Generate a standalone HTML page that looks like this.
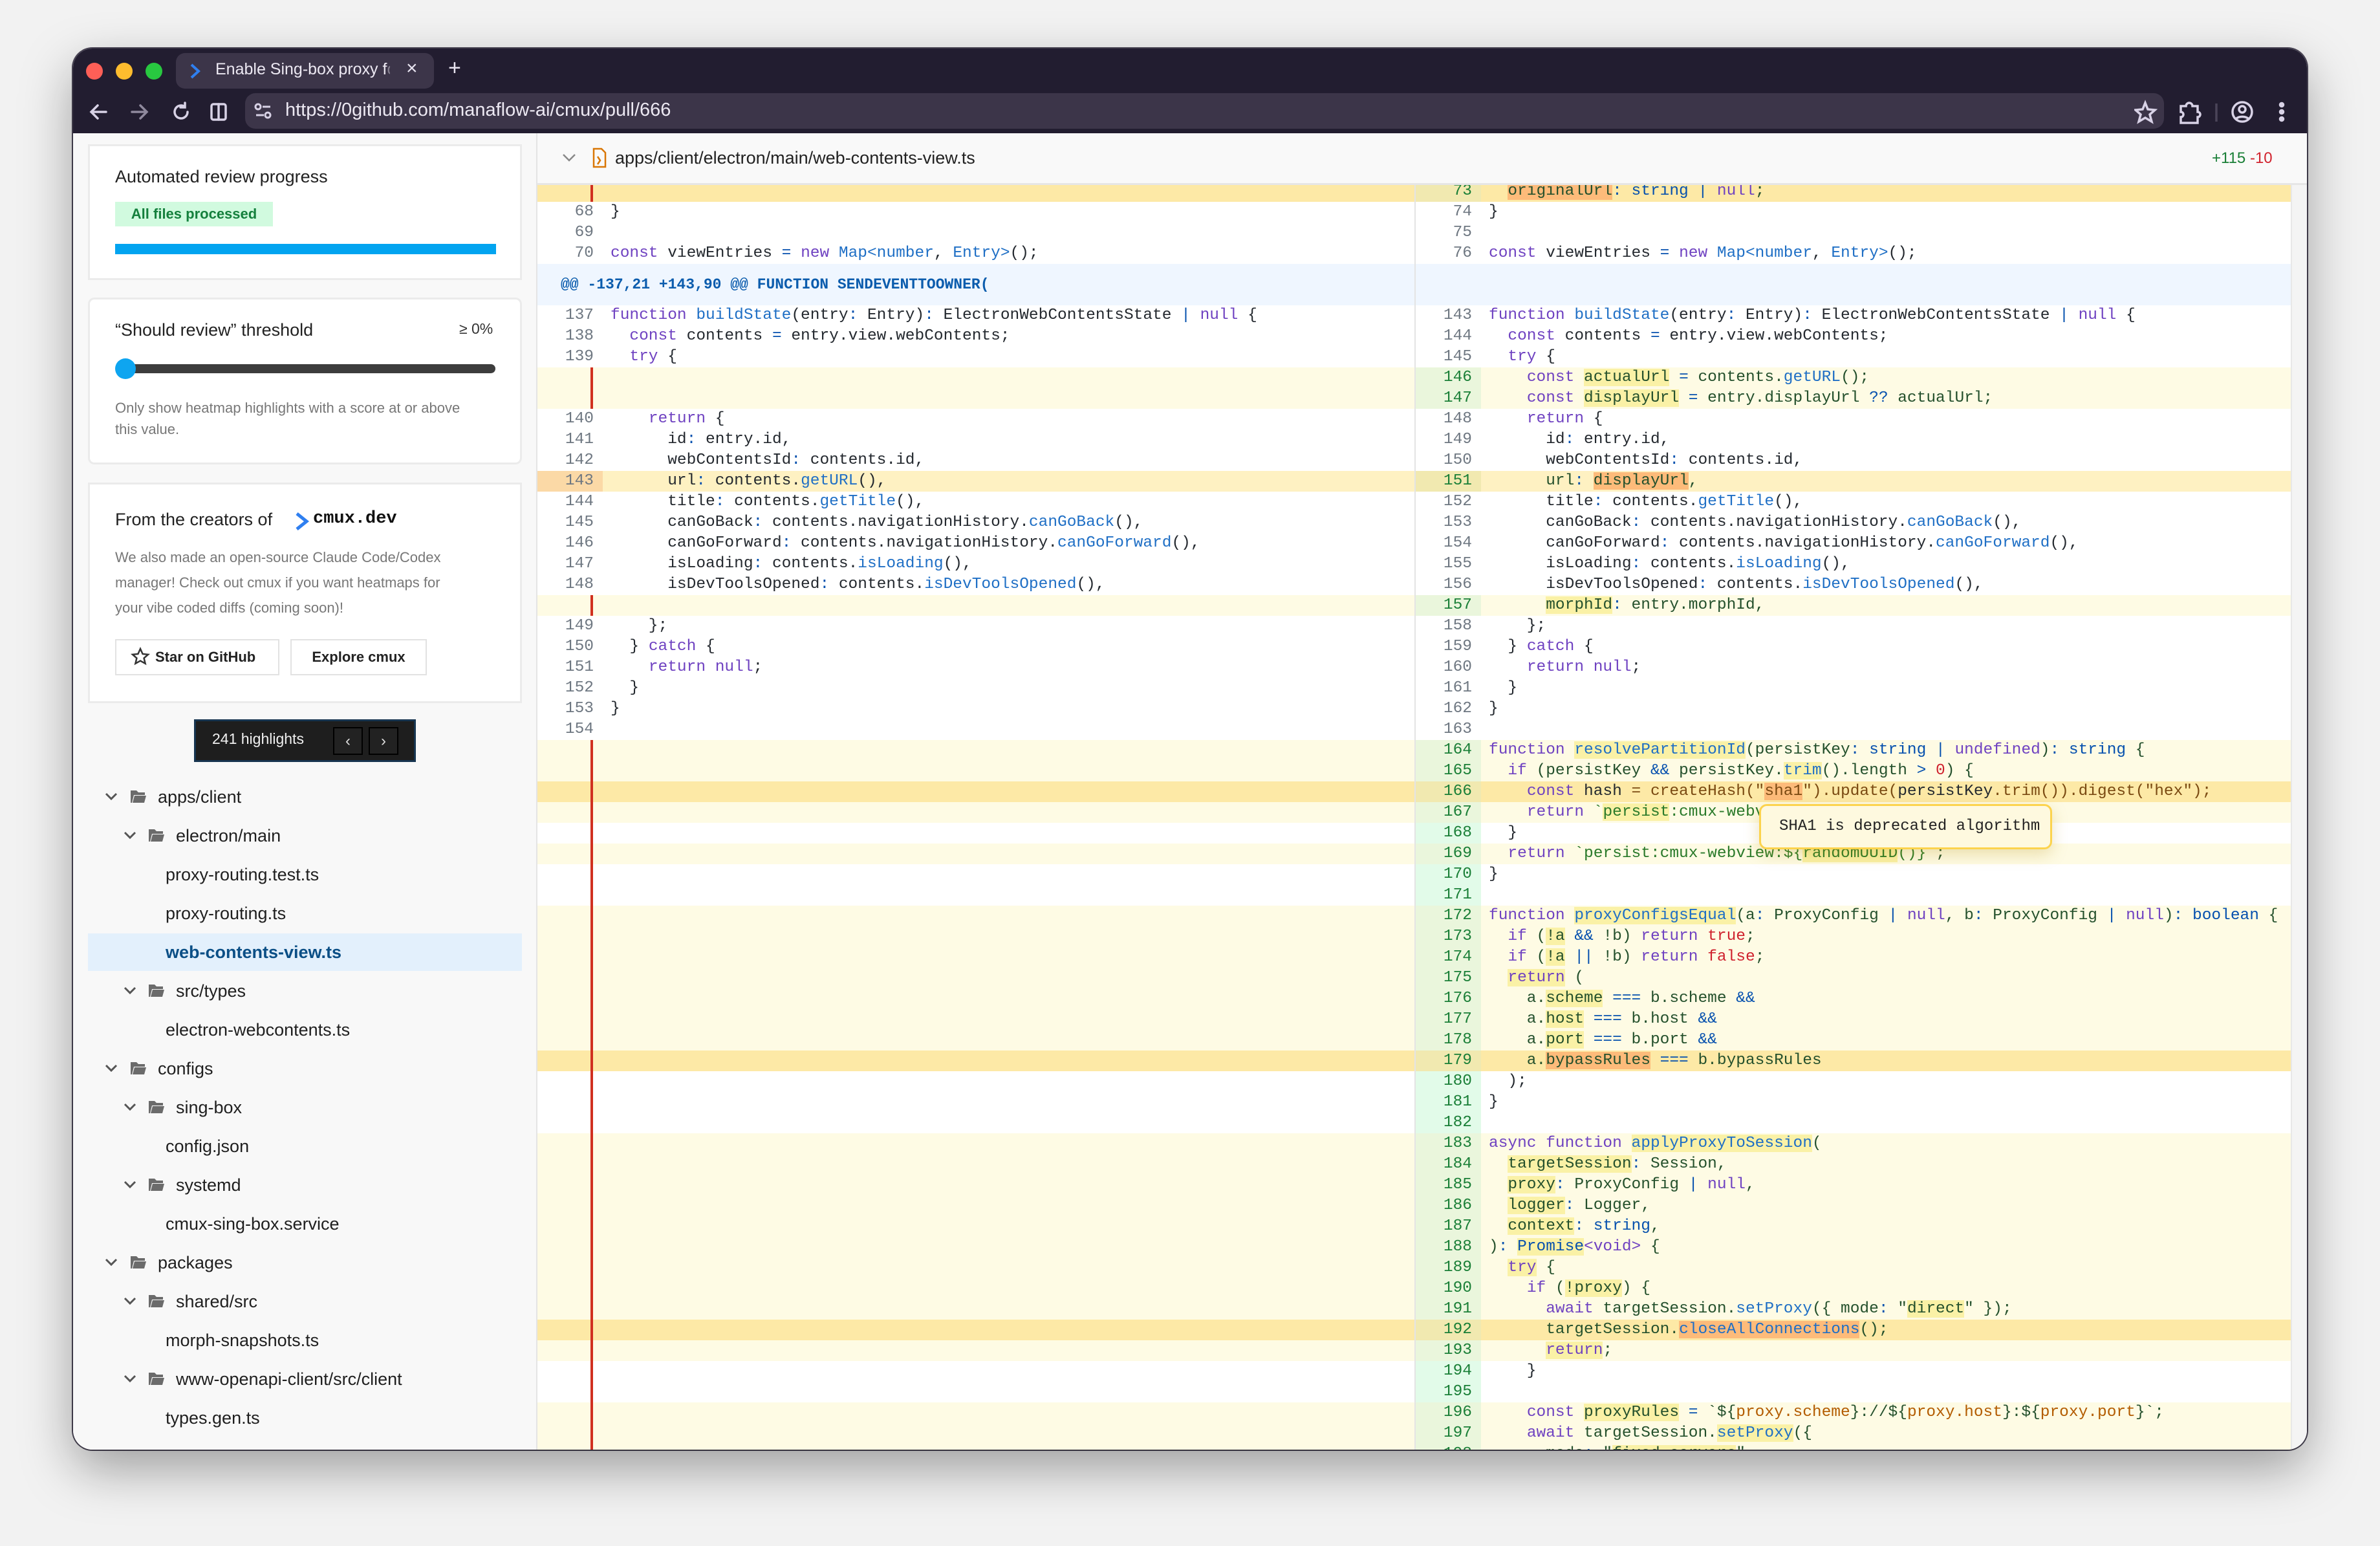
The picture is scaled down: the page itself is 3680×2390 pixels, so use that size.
<!DOCTYPE html>
<html><head><meta charset="utf-8"><style>
*{box-sizing:border-box;margin:0;padding:0}
body{width:3680px;height:2390px;background:#f2f2f2;position:relative;overflow:hidden;font-family:"Liberation Sans",sans-serif}
#win{position:absolute;left:113px;top:75px;width:3454px;height:2166px;border-radius:30px;overflow:hidden;box-shadow:0 30px 80px rgba(0,0,0,.35),0 0 0 2px #4a4556;background:#fff}
#in{position:absolute;left:-113px;top:-75px;width:3680px;height:2390px}
.ab{position:absolute}
.chrome{left:113px;top:75px;width:3454px;height:131px;background:#221d30}
.mono{font-family:"Liberation Mono",monospace}
.side{left:113px;top:206px;width:718px;height:2035px;background:#f8f8f8;border-right:2px solid #e4e4e4}
.card{background:#fff;border:3px solid #ebebeb}
.tree{font-size:27px;color:#1f1f1f;height:60px;line-height:60px}
.hdr{left:831px;top:206px;width:2736px;height:80px;background:#f9f9f9;border-bottom:3px solid #e6e6e6;z-index:5}
.pane{top:280px;height:1961px;overflow:hidden;font-family:"Liberation Mono",monospace;font-size:24.5px;color:#24292f}
.r{height:32px;line-height:32px;display:flex;position:relative;white-space:pre}
.r i{font-style:normal;flex:0 0 101px;text-align:right;padding-right:14px;color:#6e7781}
.r b{font-weight:normal;padding-left:12px}
.w{background:#fff}
.a{background:#fefbe4}.a i{background:#eaf6dc;color:#1a7f37}
.A{background:#fde9a6}.A i{background:#f1e9b0;color:#1a7f37}
.g{background:#fff}.g i{background:#e2fbe9;color:#1a7f37}
.a b,.A b{color:#24502c}
.h{height:64px;line-height:64px;background:#eff6ff;color:#0b5cad;font-weight:bold;font-size:23px;padding-left:36px}
.L .a i,.L .A i,.L .g i{background:transparent}
.L .g{background:#fff}
.ph::before{content:"";position:absolute;left:82px;top:0;width:4px;height:32px;background:#d0301f}
.L .hl i{background:#fbd9a6;color:#6e7781}
.k{color:#6f42c1}.f{color:#1f6fc5}.t{color:#0550ae}.s{color:#2a7a2a}.n{color:#cf222e}.p{color:#0550ae}.tp{color:#b35c00}
.y{background:#faf1a6}.o{background:#fdbb7a}
</style></head><body>
<div id="win"><div id="in">
<div class="ab chrome"></div>
<div class="ab" style="left:133px;top:97px;width:26px;height:26px;border-radius:50%;background:#fe5f57"></div>
<div class="ab" style="left:179px;top:97px;width:26px;height:26px;border-radius:50%;background:#febc2e"></div>
<div class="ab" style="left:225px;top:97px;width:26px;height:26px;border-radius:50%;background:#28c840"></div>
<div class="ab" style="left:272px;top:82px;width:399px;height:55px;border-radius:14px;background:#3c3549"></div>
<svg class="ab" style="left:292px;top:97px" width="20" height="26"><path d="M4 3 L15 13 L4 23" stroke="#2f7ff0" stroke-width="4" fill="none"/></svg>
<div class="ab" style="left:333px;top:93px;font-size:25px;color:#ece8f2;width:270px;overflow:hidden;white-space:nowrap">Enable Sing-box proxy f<span style="opacity:.4">or</span></div>
<div class="ab" style="left:628px;top:89px;font-size:30px;color:#e8e4f0">×</div>
<div class="ab" style="left:693px;top:86px;font-size:34px;color:#e8e4f0">+</div>
<svg class="ab" style="left:136px;top:155px" width="240" height="36" fill="none" stroke="#d8d2e6" stroke-width="3.5" stroke-linecap="round"><path d="M28 18H6M15 8L5 18l10 10"/><path d="M68 18h22M81 8l10 10-10 10" opacity=".6"/><path d="M150 10a10 10 0 1 0 4 8M150 4v7h-7"/><rect x="191" y="6" width="22" height="24" rx="3"/><path d="M202 6v24"/></svg>
<div class="ab" style="left:379px;top:144px;width:2967px;height:55px;border-radius:16px;background:#3c3549"></div>
<svg class="ab" style="left:392px;top:158px" width="30" height="28" fill="none" stroke="#d8d2e6" stroke-width="3"><circle cx="7" cy="7" r="4"/><path d="M14 7h12M4 20h12"/><circle cx="22" cy="20" r="4"/></svg>
<div class="ab" style="left:441px;top:154px;font-size:29px;color:#ece8f2">https://0github.com/manaflow-ai/cmux/pull/666</div>
<svg class="ab" style="left:3300px;top:154px" width="268" height="40" fill="none" stroke="#d8d2e6" stroke-width="3.5"><path d="M17 5l4 10 11 1-8 7 3 11-10-6-10 6 3-11-8-7 11-1z"/><path d="M72 10h8a5 5 0 0 1 10 0h8v9a4 4 0 0 1 0 8v9H72v-9a4 4 0 0 0 0-8z"/><path d="M127 6v28" stroke="#4a4458"/><circle cx="167" cy="19" r="15"/><circle cx="167" cy="15" r="5"/><path d="M157 30a12 8 0 0 1 20 0"/><circle cx="228" cy="8" r="2.5" fill="#d8d2e6"/><circle cx="228" cy="19" r="2.5" fill="#d8d2e6"/><circle cx="228" cy="30" r="2.5" fill="#d8d2e6"/></svg>

<div class="ab side"></div>
<div class="ab card" style="left:136px;top:223px;width:671px;height:210px"></div>
<div class="ab" style="left:178px;top:258px;font-size:27px;color:#222">Automated review progress</div>
<div class="ab" style="left:178px;top:312px;width:244px;height:38px;background:#d1fadf;color:#15803d;font-size:22px;line-height:38px;text-align:center;font-weight:bold">All files processed</div>
<div class="ab" style="left:178px;top:377px;width:589px;height:16px;background:#02a4f0"></div>
<div class="ab card" style="left:136px;top:460px;width:671px;height:258px;border-radius:10px"></div>
<div class="ab" style="left:178px;top:495px;font-size:27px;color:#222">“Should review” threshold</div>
<div class="ab" style="left:710px;top:495px;font-size:23px;color:#333">≥ 0%</div>
<div class="ab" style="left:190px;top:563px;width:576px;height:14px;border-radius:7px;background:#3d3d3d"></div>
<div class="ab" style="left:178px;top:554px;width:32px;height:32px;border-radius:50%;background:#0ea5f0"></div>
<div class="ab" style="left:178px;top:614px;font-size:22px;color:#777;line-height:33px;width:540px">Only show heatmap highlights with a score at or above this value.</div>
<div class="ab card" style="left:136px;top:746px;width:671px;height:341px"></div>
<div class="ab" style="left:178px;top:788px;font-size:27px;color:#222">From the creators of</div>
<svg class="ab" style="left:456px;top:791px" width="22" height="30"><path d="M3 3L18 15 3 27" stroke="#2f7ff0" stroke-width="5" fill="none"/></svg>
<div class="ab mono" style="left:484px;top:787px;font-size:27px;color:#111;font-weight:bold">cmux.dev</div>
<div class="ab" style="left:178px;top:842px;font-size:22px;color:#777;line-height:39px;width:545px">We also made an open-source Claude Code/Codex manager! Check out cmux if you want heatmaps for your vibe coded diffs (coming soon)!</div>
<div class="ab" style="left:178px;top:988px;width:254px;height:56px;border:2px solid #e2e2e2;background:#fff;font-size:22px;font-weight:bold;color:#222;line-height:52px;padding-left:60px">Star on GitHub</div>
<svg class="ab" style="left:202px;top:1000px" width="30" height="30"><path d="M15 3l3.6 8 8.4.8-6.4 5.6 2 8.4L15 21.5 7.4 25.8l2-8.4L3 11.8l8.4-.8z" fill="none" stroke="#333" stroke-width="2.5"/></svg>
<div class="ab" style="left:449px;top:988px;width:211px;height:56px;border:2px solid #e2e2e2;background:#fff;font-size:22px;font-weight:bold;color:#222;line-height:52px;text-align:center">Explore cmux</div>
<div class="ab" style="left:300px;top:1112px;width:343px;height:66px;background:#1e1e1e;border:3px solid #173550"></div>
<div class="ab" style="left:328px;top:1129px;font-size:23px;color:#f0f0f0">241 highlights</div>
<div class="ab" style="left:515px;top:1124px;width:46px;height:43px;border:2px solid #000;background:#222;color:#ddd;text-align:center;line-height:40px;font-size:24px">‹</div>
<div class="ab" style="left:570px;top:1124px;width:46px;height:43px;border:2px solid #000;background:#222;color:#ddd;text-align:center;line-height:40px;font-size:24px">›</div>
<div class="ab" style="left:136px;top:1443px;width:671px;height:58px;background:#e3f0fc"></div>
<svg class="ab" style="left:0;top:0;overflow:visible" width="1" height="1" fill="none" stroke="#555" stroke-width="3">
<path d="M164 1227l8 8 8-8"/>
<path d="M193 1287l8 8 8-8"/><path d="M193 1527l8 8 8-8"/><path d="M164 1647l8 8 8-8"/><path d="M193 1707l8 8 8-8"/><path d="M193 1827l8 8 8-8"/><path d="M164 1947l8 8 8-8"/><path d="M193 2007l8 8 8-8"/><path d="M193 2127l8 8 8-8"/>
<g fill="#6b6b6b" stroke="none">
<path d="M202 1222h9l3 3h10v4h-17l-3 12h-2z M208 1230h18l-3 11h-18z"/>
<path d="M230 1282h9l3 3h10v4h-17l-3 12h-2z M236 1290h18l-3 11h-18z"/>
<path d="M230 1522h9l3 3h10v4h-17l-3 12h-2z M236 1530h18l-3 11h-18z"/>
<path d="M202 1642h9l3 3h10v4h-17l-3 12h-2z M208 1650h18l-3 11h-18z"/>
<path d="M230 1702h9l3 3h10v4h-17l-3 12h-2z M236 1710h18l-3 11h-18z"/>
<path d="M230 1822h9l3 3h10v4h-17l-3 12h-2z M236 1830h18l-3 11h-18z"/>
<path d="M202 1942h9l3 3h10v4h-17l-3 12h-2z M208 1950h18l-3 11h-18z"/>
<path d="M230 2002h9l3 3h10v4h-17l-3 12h-2z M236 2010h18l-3 11h-18z"/>
<path d="M230 2122h9l3 3h10v4h-17l-3 12h-2z M236 2130h18l-3 11h-18z"/>
</g></svg>
<div class="ab tree" style="left:244px;top:1202px">apps/client</div>
<div class="ab tree" style="left:272px;top:1262px">electron/main</div>
<div class="ab tree" style="left:256px;top:1322px">proxy-routing.test.ts</div>
<div class="ab tree" style="left:256px;top:1382px">proxy-routing.ts</div>
<div class="ab tree" style="left:256px;top:1442px;color:#0b4f86;font-weight:bold">web-contents-view.ts</div>
<div class="ab tree" style="left:272px;top:1502px">src/types</div>
<div class="ab tree" style="left:256px;top:1562px">electron-webcontents.ts</div>
<div class="ab tree" style="left:244px;top:1622px">configs</div>
<div class="ab tree" style="left:272px;top:1682px">sing-box</div>
<div class="ab tree" style="left:256px;top:1742px">config.json</div>
<div class="ab tree" style="left:272px;top:1802px">systemd</div>
<div class="ab tree" style="left:256px;top:1862px">cmux-sing-box.service</div>
<div class="ab tree" style="left:244px;top:1922px">packages</div>
<div class="ab tree" style="left:272px;top:1982px">shared/src</div>
<div class="ab tree" style="left:256px;top:2042px">morph-snapshots.ts</div>
<div class="ab tree" style="left:272px;top:2102px">www-openapi-client/src/client</div>
<div class="ab tree" style="left:256px;top:2162px">types.gen.ts</div>

<div class="ab hdr"></div>
<svg class="ab" style="left:868px;top:236px;z-index:6" width="24" height="16"><path d="M3 3l9 9 9-9" stroke="#888" stroke-width="2.5" fill="none"/></svg>
<svg class="ab" style="left:915px;top:228px;z-index:6" width="24" height="32" fill="none" stroke="#d97706" stroke-width="2.5"><path d="M3 2h12l6 6v22H3z"/><path d="M9 14l4 6-4 6"/></svg>
<div class="ab" style="left:951px;top:229px;font-size:27px;color:#222;z-index:6">apps/client/electron/main/web-contents-view.ts</div>
<div class="ab" style="left:3420px;top:231px;font-size:24px;z-index:6"><span style="color:#1a7f37">+115</span> <span style="color:#d1242f">-10</span></div>

<div class="ab pane L" style="left:831px;width:1356px">
<div class="r A ph"><i></i><b></b></div>
<div class="r w"><i>68</i><b>}</b></div>
<div class="r w"><i>69</i><b></b></div>
<div class="r w"><i>70</i><b><span class=k>const</span> viewEntries <span class=p>=</span> <span class=k>new</span> <span class=f>Map&lt;number</span>, <span class=f>Entry&gt;</span>();</b></div>
<div class="h">@@ -137,21 +143,90 @@ FUNCTION SENDEVENTTOOWNER(</div>
<div class="r w"><i>137</i><b><span class=k>function</span> <span class=f>buildState</span>(entry<span class=p>:</span> Entry)<span class=p>:</span> ElectronWebContentsState <span class=p>|</span> <span class=k>null</span> {</b></div>
<div class="r w"><i>138</i><b>  <span class=k>const</span> contents <span class=p>=</span> entry.view.webContents;</b></div>
<div class="r w"><i>139</i><b>  <span class=k>try</span> {</b></div>
<div class="r a ph"><i></i><b></b></div>
<div class="r a ph"><i></i><b></b></div>
<div class="r w"><i>140</i><b>    <span class=k>return</span> {</b></div>
<div class="r w"><i>141</i><b>      id<span class=p>:</span> entry.id,</b></div>
<div class="r w"><i>142</i><b>      webContentsId<span class=p>:</span> contents.id,</b></div>
<div class="r A hl" style="background:#fef1c2"><i>143</i><b style="color:#24292f">      url<span class=p>:</span> contents.<span class=f>getURL</span>(),</b></div>
<div class="r w"><i>144</i><b>      title<span class=p>:</span> contents.<span class=f>getTitle</span>(),</b></div>
<div class="r w"><i>145</i><b>      canGoBack<span class=p>:</span> contents.navigationHistory.<span class=f>canGoBack</span>(),</b></div>
<div class="r w"><i>146</i><b>      canGoForward<span class=p>:</span> contents.navigationHistory.<span class=f>canGoForward</span>(),</b></div>
<div class="r w"><i>147</i><b>      isLoading<span class=p>:</span> contents.<span class=f>isLoading</span>(),</b></div>
<div class="r w"><i>148</i><b>      isDevToolsOpened<span class=p>:</span> contents.<span class=f>isDevToolsOpened</span>(),</b></div>
<div class="r a ph"><i></i><b></b></div>
<div class="r w"><i>149</i><b>    };</b></div>
<div class="r w"><i>150</i><b>  } <span class=k>catch</span> {</b></div>
<div class="r w"><i>151</i><b>    <span class=k>return</span> <span class=k>null</span>;</b></div>
<div class="r w"><i>152</i><b>  }</b></div>
<div class="r w"><i>153</i><b>}</b></div>
<div class="r w"><i>154</i><b></b></div>
<div class="r a ph"></div><div class="r a ph"></div><div class="r A ph"></div><div class="r a ph"></div><div class="r g ph"></div><div class="r a ph"></div><div class="r g ph"></div><div class="r g ph"></div>
<div class="r a ph"></div><div class="r a ph"></div><div class="r a ph"></div><div class="r a ph"></div><div class="r a ph"></div><div class="r a ph"></div><div class="r a ph"></div><div class="r A ph"></div><div class="r g ph"></div><div class="r g ph"></div><div class="r g ph"></div>
<div class="r a ph"></div><div class="r a ph"></div><div class="r a ph"></div><div class="r a ph"></div><div class="r a ph"></div><div class="r a ph"></div><div class="r a ph"></div><div class="r a ph"></div><div class="r a ph"></div><div class="r A ph"></div><div class="r a ph"></div><div class="r g ph"></div><div class="r g ph"></div><div class="r a ph"></div><div class="r a ph"></div><div class="r a ph"></div>
</div>

<div class="ab pane" style="left:2187px;width:1355px;border-left:2px solid #e4e4e4">
<div class="r A"><i>73</i><b>  <span class=o>originalUrl</span><span class=p>:</span> <span class=t>string</span> <span class=p>|</span> <span class=k>null</span>;</b></div>
<div class="r w"><i>74</i><b>}</b></div>
<div class="r w"><i>75</i><b></b></div>
<div class="r w"><i>76</i><b><span class=k>const</span> viewEntries <span class=p>=</span> <span class=k>new</span> <span class=f>Map&lt;number</span>, <span class=f>Entry&gt;</span>();</b></div>
<div class="h"></div>
<div class="r w"><i>143</i><b><span class=k>function</span> <span class=f>buildState</span>(entry<span class=p>:</span> Entry)<span class=p>:</span> ElectronWebContentsState <span class=p>|</span> <span class=k>null</span> {</b></div>
<div class="r w"><i>144</i><b>  <span class=k>const</span> contents <span class=p>=</span> entry.view.webContents;</b></div>
<div class="r w"><i>145</i><b>  <span class=k>try</span> {</b></div>
<div class="r a"><i>146</i><b>    <span class=k>const</span> <span class=y>actualUrl</span> <span class=p>=</span> contents.<span class=f>getURL</span>();</b></div>
<div class="r a"><i>147</i><b>    <span class=k>const</span> <span class=y>displayUrl</span> <span class=p>=</span> entry.displayUrl <span class=p>??</span> actualUrl;</b></div>
<div class="r w"><i>148</i><b>    <span class=k>return</span> {</b></div>
<div class="r w"><i>149</i><b>      id<span class=p>:</span> entry.id,</b></div>
<div class="r w"><i>150</i><b>      webContentsId<span class=p>:</span> contents.id,</b></div>
<div class="r A" style="background:#fef1c2"><i>151</i><b>      url<span class=p>:</span> <span class=o>displayUrl</span>,</b></div>
<div class="r w"><i>152</i><b>      title<span class=p>:</span> contents.<span class=f>getTitle</span>(),</b></div>
<div class="r w"><i>153</i><b>      canGoBack<span class=p>:</span> contents.navigationHistory.<span class=f>canGoBack</span>(),</b></div>
<div class="r w"><i>154</i><b>      canGoForward<span class=p>:</span> contents.navigationHistory.<span class=f>canGoForward</span>(),</b></div>
<div class="r w"><i>155</i><b>      isLoading<span class=p>:</span> contents.<span class=f>isLoading</span>(),</b></div>
<div class="r w"><i>156</i><b>      isDevToolsOpened<span class=p>:</span> contents.<span class=f>isDevToolsOpened</span>(),</b></div>
<div class="r a"><i>157</i><b>      <span class=y>morphId</span><span class=p>:</span> entry.morphId,</b></div>
<div class="r w"><i>158</i><b>    };</b></div>
<div class="r w"><i>159</i><b>  } <span class=k>catch</span> {</b></div>
<div class="r w"><i>160</i><b>    <span class=k>return</span> <span class=k>null</span>;</b></div>
<div class="r w"><i>161</i><b>  }</b></div>
<div class="r w"><i>162</i><b>}</b></div>
<div class="r w"><i>163</i><b></b></div>
<div class="r a"><i>164</i><b><span class=k>function</span> <span class="f y">resolvePartitionId</span>(persistKey<span class=p>:</span> <span class=t>string</span> <span class=p>|</span> <span class=k>undefined</span>)<span class=p>:</span> <span class=t>string</span> {</b></div>
<div class="r a"><i>165</i><b>  <span class=k>if</span> (persistKey <span class=p>&amp;&amp;</span> persistKey.<span class="f y">trim</span>().length <span class=p>&gt;</span> <span class=n>0</span>) {</b></div>
<div class="r A"><i>166</i><b style="color:#7a4a12">    <span class=k>const</span> <span style="color:#24292f">hash</span> = createHash("<span class=o>sha1</span>").update(<span style="color:#24292f">persistKey</span>.trim()).digest("hex");</b></div>
<div class="r a"><i>167</i><b>    <span class=k>return</span> <span class=s>`<span class=y>persist</span>:cmux-webview:${randomUUID()}`</span>;</b></div>
<div class="r g"><i>168</i><b>  }</b></div>
<div class="r a"><i>169</i><b>  <span class=k>return</span> <span class=s>`persist:cmux-webview:${<span class=y>randomUUID</span>()}`</span>;</b></div>
<div class="r g"><i>170</i><b>}</b></div>
<div class="r g"><i>171</i><b></b></div>
<div class="r a"><i>172</i><b><span class=k>function</span> <span class="f y">proxyConfigsEqual</span>(a<span class=p>:</span> ProxyConfig <span class=p>|</span> <span class=k>null</span>, b<span class=p>:</span> ProxyConfig <span class=p>|</span> <span class=k>null</span>)<span class=p>:</span> <span class=t>boolean</span> {</b></div>
<div class="r a"><i>173</i><b>  <span class=k>if</span> (<span class=y>!a</span> <span class=p>&amp;&amp;</span> !b) <span class=k>return</span> <span class=n>true</span>;</b></div>
<div class="r a"><i>174</i><b>  <span class=k>if</span> (<span class=y>!a</span> <span class=p>||</span> !b) <span class=k>return</span> <span class=n>false</span>;</b></div>
<div class="r a"><i>175</i><b>  <span class="k y">return</span> (</b></div>
<div class="r a"><i>176</i><b>    a.<span class=y>scheme</span> <span class=p>===</span> b.scheme <span class=p>&amp;&amp;</span></b></div>
<div class="r a"><i>177</i><b>    a.<span class=y>host</span> <span class=p>===</span> b.host <span class=p>&amp;&amp;</span></b></div>
<div class="r a"><i>178</i><b>    a.<span class=y>port</span> <span class=p>===</span> b.port <span class=p>&amp;&amp;</span></b></div>
<div class="r A"><i>179</i><b>    a.<span class=o>bypassRules</span> <span class=p>===</span> b.bypassRules</b></div>
<div class="r g"><i>180</i><b>  );</b></div>
<div class="r g"><i>181</i><b>}</b></div>
<div class="r g"><i>182</i><b></b></div>
<div class="r a"><i>183</i><b><span class=k>async</span> <span class=k>function</span> <span class="f y">applyProxyToSession</span>(</b></div>
<div class="r a"><i>184</i><b>  <span class=y>targetSession</span><span class=p>:</span> Session,</b></div>
<div class="r a"><i>185</i><b>  <span class=y>proxy</span><span class=p>:</span> ProxyConfig <span class=p>|</span> <span class=k>null</span>,</b></div>
<div class="r a"><i>186</i><b>  <span class=y>logger</span><span class=p>:</span> Logger,</b></div>
<div class="r a"><i>187</i><b>  <span class=y>context</span><span class=p>:</span> <span class=t>string</span>,</b></div>
<div class="r a"><i>188</i><b>)<span class=p>:</span> <span class="t y">Promise</span><span class=k>&lt;void&gt;</span> {</b></div>
<div class="r a"><i>189</i><b>  <span class="k y">try</span> {</b></div>
<div class="r a"><i>190</i><b>    <span class=k>if</span> (<span class=y>!proxy</span>) {</b></div>
<div class="r a"><i>191</i><b>      <span class=k>await</span> targetSession.<span class=f>setProxy</span>({ mode<span class=p>:</span> "<span class=y>direct</span>" });</b></div>
<div class="r A"><i>192</i><b>      targetSession.<span class="f o">closeAllConnections</span>();</b></div>
<div class="r a"><i>193</i><b>      <span class="k y">return</span>;</b></div>
<div class="r g"><i>194</i><b>    }</b></div>
<div class="r g"><i>195</i><b></b></div>
<div class="r a"><i>196</i><b>    <span class=k>const</span> <span class=y>proxyRules</span> <span class=p>=</span> `${<span class=tp>proxy.scheme</span>}://${<span class=tp>proxy.host</span>}:${<span class=tp>proxy.port</span>}`;</b></div>
<div class="r a"><i>197</i><b>    <span class=k>await</span> targetSession.<span class="f y">setProxy</span>({</b></div>
<div class="r a"><i>198</i><b>      mode<span class=p>:</span> "<span class=y>fixed_servers</span>",</b></div>
</div>
<div class="ab" style="left:3542px;top:286px;width:25px;height:1955px;background:#f4f4f4;border-left:2px solid #e8e8e8"></div>

<div class="ab mono" style="left:2720px;top:1243px;width:453px;height:70px;background:#fef9df;border:3px solid #fcd34d;border-radius:12px;box-shadow:0 8px 24px rgba(180,140,0,.25);font-size:24px;line-height:64px;padding-left:28px;color:#222;z-index:9">SHA1 is deprecated algorithm</div>
</div></div>
</body></html>
